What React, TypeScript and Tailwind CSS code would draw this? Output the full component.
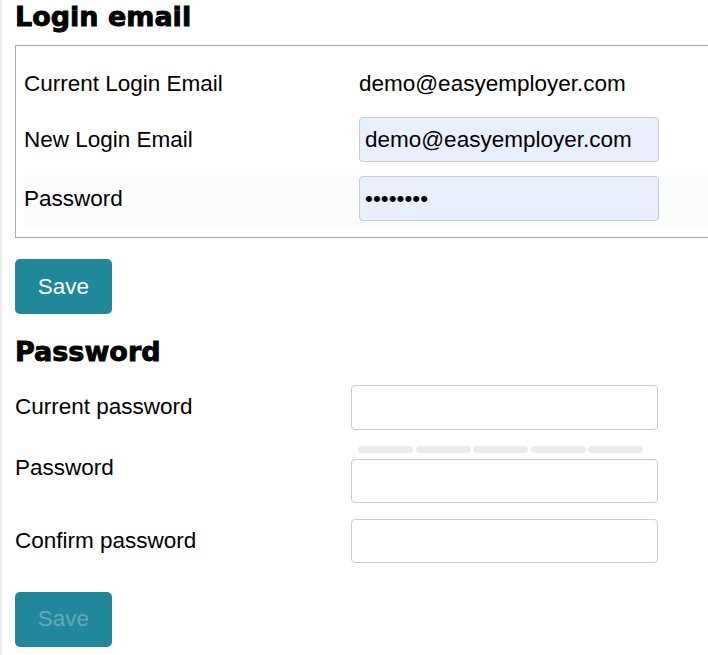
import { useState } from 'react'

// Account settings: change login email + change password
const BODY_FONT = { fontFamily: '"Liberation Sans", Arial, sans-serif' }
const HEAD_FONT = { fontFamily: '"DejaVu Sans", Verdana, sans-serif' }

function StrengthBar() {
  return (
    <div className="flex gap-[2.5px] ml-[7px] w-[285px] h-[6.5px]">
      {[0, 1, 2, 3, 4].map((i) => (
        <div key={i} className="flex-1 rounded-full bg-[#ececec]" />
      ))}
    </div>
  )
}

export default function App() {
  const [newEmail, setNewEmail] = useState('demo@easyemployer.com')
  const [pwd, setPwd] = useState('12345678')
  const [current, setCurrent] = useState('')
  const [next, setNext] = useState('')
  const [confirm, setConfirm] = useState('')

  const canSave = current.length > 0 && next.length > 0 && next === confirm

  return (
    <div className="min-h-screen w-full overflow-hidden bg-white border-l-2 border-[#ededed] pl-[13px] text-black" style={BODY_FONT}>
      {/* Login email */}
      <h2 className="text-[27px] leading-[34px] font-bold [-webkit-text-stroke:0.9px_black]" style={HEAD_FONT}>Login email</h2>

      <div className="mt-[11px] w-[720px] border border-[#aaaaaa] pt-[6px] pb-[9px]">
        <div className="ml-[7px] flex items-center pt-[10px] pb-[4px]">
          <div className="w-[336px] pl-[1px] text-[22.5px] leading-[44px]">Current Login Email</div>
          <div className="text-[22.5px] leading-[44px]">demo@easyemployer.com</div>
        </div>
        <div className="ml-[7px] flex items-center py-[7px]">
          <label className="w-[336px] pl-[1px] text-[22.5px]">New Login Email</label>
          <input
            value={newEmail}
            onChange={(e) => setNewEmail(e.target.value)}
            className="w-[300px] h-[45px] rounded-[4px] border border-[#cccccc] bg-[#e8f0fe] pl-[5px] text-[22.5px] outline-none"
            style={BODY_FONT}
          />
        </div>
        <div className="ml-[7px] flex items-center py-[7px] bg-[#fbfdfd]">
          <label className="w-[336px] pl-[1px] text-[22.5px]">Password</label>
          <input
            type="password"
            value={pwd}
            onChange={(e) => setPwd(e.target.value)}
            className="w-[300px] h-[45px] rounded-[4px] border border-[#cccccc] bg-[#e8f0fe] pl-[5px] text-[22.5px] outline-none"
            style={BODY_FONT}
          />
        </div>
      </div>

      <button className="mt-[21px] w-[97px] h-[55px] rounded-[5px] bg-[#21879b] text-white text-[22.5px]" style={BODY_FONT}>
        Save
      </button>

      {/* Password */}
      <h2 className="mt-[21px] text-[27px] leading-[34px] font-bold [-webkit-text-stroke:0.9px_black]" style={HEAD_FONT}>Password</h2>

      <div className="mt-[16px] flex items-start">
        <label className="w-[336px] pt-[9px] text-[22.5px] leading-[26px]">Current password</label>
        <input
          type="password"
          value={current}
          onChange={(e) => setCurrent(e.target.value)}
          className="w-[307px] h-[45px] rounded-[4px] border border-[#cccccc] bg-white px-[5px] text-[22.5px] outline-none"
        />
      </div>

      <div className="mt-[16px] flex items-start">
        <label className="w-[336px] pt-[9px] text-[22.5px] leading-[26px]">Password</label>
        <div className="flex flex-col">
          <StrengthBar />
          <input
            type="password"
            value={next}
            onChange={(e) => setNext(e.target.value)}
            className="mt-[6px] w-[307px] h-[44px] rounded-[4px] border border-[#cccccc] bg-white px-[5px] text-[22.5px] outline-none"
          />
        </div>
      </div>

      <div className="mt-[16px] flex items-start">
        <label className="w-[336px] pt-[9px] text-[22.5px] leading-[26px]">Confirm password</label>
        <input
          type="password"
          value={confirm}
          onChange={(e) => setConfirm(e.target.value)}
          className="w-[307px] h-[44px] rounded-[4px] border border-[#cccccc] bg-white px-[5px] text-[22.5px] outline-none"
        />
      </div>

      <button
        disabled={!canSave}
        className={canSave
          ? 'mt-[29px] w-[97px] h-[55px] rounded-[5px] bg-[#21879b] text-white text-[22.5px]'
          : 'mt-[29px] w-[97px] h-[55px] rounded-[5px] bg-[#21879b] text-[#62a9b8] text-[22.5px]'}
        style={BODY_FONT}
      >
        Save
      </button>
    </div>
  )
}
